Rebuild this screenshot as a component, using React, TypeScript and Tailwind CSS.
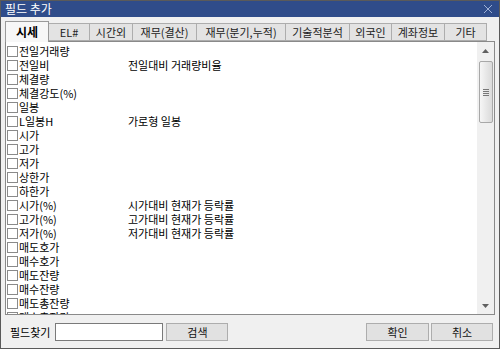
import React from "react";

const FONT = { fontFamily: '"Noto Sans CJK KR", "Noto Sans", sans-serif' };

const tabs: { label: string; w: string }[] = [
  { label: "시세", w: "w-[44px]" },
  { label: "EL#", w: "w-[41px]" },
  { label: "시간외", w: "w-[43px]" },
  { label: "재무(결산)", w: "w-[64px]" },
  { label: "재무(분기,누적)", w: "w-[89px]" },
  { label: "기술적분석", w: "w-[64px]" },
  { label: "외국인", w: "w-[42px]" },
  { label: "계좌정보", w: "w-[53px]" },
  { label: "기타", w: "w-[42px]" },
];

const rows: [string, string][] = [
  ["전일거래량", ""],
  ["전일비", "전일대비 거래량비율"],
  ["체결량", ""],
  ["체결강도(%)", ""],
  ["일봉", ""],
  ["L일봉H", "가로형 일봉"],
  ["시가", ""],
  ["고가", ""],
  ["저가", ""],
  ["상한가", ""],
  ["하한가", ""],
  ["시가(%)", "시가대비 현재가 등락률"],
  ["고가(%)", "고가대비 현재가 등락률"],
  ["저가(%)", "저가대비 현재가 등락률"],
  ["매도호가", ""],
  ["매수호가", ""],
  ["매도잔량", ""],
  ["매수잔량", ""],
  ["매도총잔량", ""],
  ["매수총잔량", ""],
];

function Btn({ label, w }: { label: string; w: string }) {
  return (
    <div
      className={`${w} h-[18px] border border-[#adadad] bg-[#e1e1e1] flex items-center justify-center text-[11px] leading-[14px] text-[#111]`}
    >
      {label}
    </div>
  );
}

export default function App() {
  return (
    <div
      className="w-[500px] h-[349px] border border-[#5a5a5a] bg-[#f0f0f0] flex flex-col overflow-hidden"
      style={FONT}
    >
      {/* Title bar */}
      <div className="h-[16px] shrink-0 bg-[#2f4c8a] flex items-center justify-between pl-[4px] pr-[6px]">
        <span className="text-[12px] leading-[14px] text-white">필드 추가</span>
        <svg width="10" height="10" viewBox="0 0 10 10">
          <path d="M1 1 L9 9 M9 1 L1 9" stroke="#9fb1d6" strokeWidth="1" />
        </svg>
      </div>

      {/* Tabs */}
      <div className="h-[24px] shrink-0 flex items-end pl-[4px] relative z-10">
        {tabs.map((t, i) =>
          i === 0 ? (
            <div
              key={t.label}
              className={`${t.w} h-[21px] -mb-[1px] bg-[#f7f7f7] border border-b-0 border-[#9a9a9a] flex items-center justify-center text-[12px] leading-[14px] font-bold text-black`}
            >
              {t.label}
            </div>
          ) : (
            <div
              key={t.label}
              className={`${t.w} h-[18px] bg-[#e3e3e3] border border-l-0 border-[#adadad] flex items-center justify-center text-[11px] leading-[14px] text-[#222]`}
            >
              {t.label}
            </div>
          )
        )}
      </div>

      {/* List box */}
      <div className="mx-[4px] h-[274px] shrink-0 border border-[#8a8a8a] bg-white flex overflow-hidden">
        <div className="flex-1 pt-[2px] overflow-hidden">
          {rows.map(([a, b]) => (
            <div key={a} className="h-[14px] flex items-center text-[11px] leading-[13px] text-black">
              <div className="w-[11px] h-[11px] ml-[1px] mr-[1px] border border-[#8a8a8a] bg-white shrink-0" />
              <span className="w-[109px] shrink-0">{a}</span>
              <span>{b}</span>
            </div>
          ))}
        </div>
        {/* Scrollbar */}
        <div className="w-[17px] shrink-0 bg-[#f0f0f0] flex flex-col items-center">
          <div className="h-[17px] w-full flex items-center justify-center">
            <svg width="7" height="4" viewBox="0 0 7 4">
              <path d="M0 4 L3.5 0 L7 4 Z" fill="#606060" />
            </svg>
          </div>
          <div className="mt-[2px] w-[14px] h-[62px] border border-[#a8a8a8] rounded-[2px] bg-gradient-to-r from-[#f6f6f6] to-[#dadada] flex flex-col items-center justify-center gap-[1px]">
            <div className="w-[6px] h-[1px] bg-[#777]" />
            <div className="w-[6px] h-[1px] bg-[#777]" />
            <div className="w-[6px] h-[1px] bg-[#777]" />
            <div className="w-[6px] h-[1px] bg-[#777]" />
          </div>
          <div className="flex-1" />
          <div className="h-[17px] w-full flex items-center justify-center">
            <svg width="7" height="4" viewBox="0 0 7 4">
              <path d="M0 0 L3.5 4 L7 0 Z" fill="#606060" />
            </svg>
          </div>
        </div>
      </div>

      {/* Bottom row */}
      <div className="flex-1 flex items-center pl-[9px] pr-[6px] pt-[1px]">
        <span className="text-[11px] leading-[14px] text-black mr-[5px]">필드찾기</span>
        <div className="w-[108px] h-[18px] border border-[#7a7a7a] bg-white mr-[3px]" />
        <Btn label="검색" w="w-[62px]" />
        <div className="flex-1" />
        <Btn label="확인" w="w-[63px]" />
        <div className="w-[2px]" />
        <Btn label="취소" w="w-[62px]" />
      </div>
    </div>
  );
}
